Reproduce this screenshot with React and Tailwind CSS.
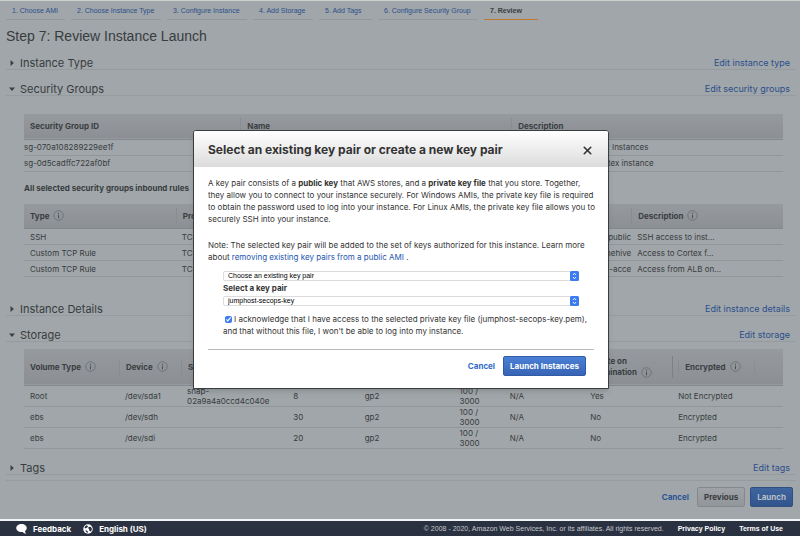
import { X } from "lucide-react";

const steps = [
  { label: "1. Choose AMI", cell: "w-[59px]" },
  { label: "2. Choose Instance Type", cell: "w-[90px]" },
  { label: "3. Configure Instance", cell: "w-[80px]" },
  { label: "4. Add Storage", cell: "w-[60px]" },
  { label: "5. Add Tags", cell: "w-[53px]" },
  { label: "6. Configure Security Group", cell: "w-[100px]" },
  { label: "7. Review", cell: "w-[54px]", active: true },
];

const groups = [
  { id: "sg-070a108289229ee1f", name: "", description: "Security group for EC2 Instances" },
  { id: "sg-0d5cadffc722af0bf", name: "", description: "Security group for Cortex instance" },
];

const rules = [
  { type: "SSH", protocol: "TCP", source: "-public", description: "SSH access to inst..." },
  { type: "Custom TCP Rule", protocol: "TCP", source: "hehive", description: "Access to Cortex f..." },
  { type: "Custom TCP Rule", protocol: "TCP", source: "b-acce", description: "Access from ALB on..." },
];

const volumes = [
  { type: "Root", device: "/dev/sda1", snapshot: "snap-02a9a4a0ccd4c040e", size: "8", remove: "Yes", encrypted: "Not Encrypted" },
  { type: "ebs", device: "/dev/sdh", snapshot: "", size: "30", remove: "No", encrypted: "Encrypted" },
  { type: "ebs", device: "/dev/sdi", snapshot: "", size: "20", remove: "No", encrypted: "Encrypted" },
];

const Info = () => (
  <svg viewBox="0 0 22 22" className="ml-1 inline-block size-[11px] shrink-0" fill="none" aria-hidden="true">
    <circle cx="11" cy="11" r="9.5" stroke="#686d71" strokeWidth="1.6" />
    <circle cx="11" cy="6.6" r="1.3" fill="#4b5054" />
    <path d="M11 9.5v7" stroke="#4b5054" strokeWidth="2" />
  </svg>
);

const Section = ({ title, edit, open }) => (
  <div className="mr-1 ml-[6px] flex h-5 items-end border-b border-[#959b9e] pr-[6px] pl-[3px]">
    <svg viewBox="0 0 8 8" className="mr-[5px] mb-[3px] size-[6px] fill-[#3b3f43]" aria-hidden="true">
      <path d={open ? "M0 2h8L4 6.500z" : "M2 0v8l4.500-4z"} />
    </svg>
    <h2 className="flex-1 text-[11px] leading-[12px]">{title}</h2>
    <a href="#" className="text-[9px] leading-[12px] text-[#2c4f8c]">{edit}</a>
  </div>
);

const Th = ({ children, info, line = true }) => (
  <th className="p-0 text-left font-bold">
    <div className={`flex h-4 items-center pl-[6px] whitespace-nowrap ${line ? "border-l border-[#888d91]" : ""}`}>
      {children}
      {info && <Info />}
    </div>
  </th>
);

const tableClass = "w-full table-fixed border-collapse text-[8px] leading-[10px]";
const headClass = "border-b border-[#85898d] bg-linear-to-b from-[#96999d] to-[#8c8f93] text-[#3a3e42]";
const rowClass = "border-b border-[#90969a]";

const GroupsTable = () => (
  <table className={tableClass}>
    <colgroup>
      <col className="w-[28.5%]" />
      <col className="w-[35.7%]" />
      <col />
    </colgroup>
    <thead className={headClass}>
      <tr className="h-[25px]">
        <Th line={false}>Security Group ID</Th>
        <Th>Name</Th>
        <Th>Description</Th>
      </tr>
    </thead>
    <tbody>
      {groups.map((g) => (
        <tr key={g.id} className={`h-4 ${rowClass}`}>
          <td className="p-0">{g.id}</td>
          <td className="p-0 pl-3">{g.name}</td>
          <td className="p-0 pl-3">{g.description}</td>
        </tr>
      ))}
    </tbody>
  </table>
);

const RulesTable = () => (
  <table className={tableClass}>
    <colgroup>
      <col className="w-[20%]" />
      <col className="w-[40%]" />
      <col className="w-[20%]" />
      <col />
    </colgroup>
    <thead className={headClass}>
      <tr className="h-[25px]">
        <Th info line={false}>Type</Th>
        <Th>Protocol</Th>
        <Th />
        <Th info>Description</Th>
      </tr>
    </thead>
    <tbody>
      {rules.map((r, i) => (
        <tr key={i} className={`h-4 ${rowClass}`}>
          <td className="p-0 pl-[6px]">{r.type}</td>
          <td className="p-0 pl-[6px]">{r.protocol}</td>
          <td className="p-0 text-right whitespace-nowrap">{r.source}</td>
          <td className="p-0 pl-[6px]">{r.description}</td>
        </tr>
      ))}
    </tbody>
  </table>
);

const StorageTable = () => (
  <table className={tableClass}>
    <colgroup>
      <col className="w-[12.500%]" />
      <col className="w-[8.200%]" />
      <col className="w-[14%]" />
      <col className="w-[9.400%]" />
      <col className="w-[12.500%]" />
      <col className="w-[6.600%]" />
      <col className="w-[10.600%]" />
      <col className="w-[11.600%]" />
      <col />
    </colgroup>
    <thead className={headClass}>
      <tr className="h-9">
        <Th info line={false}>Volume Type</Th>
        <Th info>Device</Th>
        <Th>Snapshot</Th>
        <Th />
        <Th />
        <Th />
        <Th />
        <th className="p-0 pl-[6px] text-left leading-[11px] font-bold">
          Delete on
          <br />
          <span className="inline-flex items-center">Termination<Info /></span>
        </th>
        <th className="p-0 text-left font-bold">
          <div className="flex h-[22px] items-center border-l border-[#7b8084] pl-[5px]">
            <div className="flex h-3 w-[77px] items-center border-x border-[#888d91] pl-[6px]">
              Encrypted
              <Info />
            </div>
          </div>
        </th>
      </tr>
    </thead>
    <tbody>
      {volumes.map((v) => (
        <tr key={v.device} className={`h-[21px] ${rowClass}`}>
          <td className="p-0 pl-[6px]">{v.type}</td>
          <td className="p-0 pl-[6px]">{v.device}</td>
          <td className="p-0 pr-5 pl-[6px]">{v.snapshot}</td>
          <td className="p-0 pl-[6px]">{v.size}</td>
          <td className="p-0 pl-[6px]">gp2</td>
          <td className="p-0 pl-[6px]">100 /<br />3000</td>
          <td className="p-0 pl-[6px]">N/A</td>
          <td className="p-0 pl-[6px]">{v.remove}</td>
          <td className="p-0 pl-[6px]">{v.encrypted}</td>
        </tr>
      ))}
    </tbody>
  </table>
);

const KeySelect = ({ id, label, options }) => (
  <div className="relative">
    <select
      id={id}
      aria-label={label}
      className="block h-[10px] w-full appearance-none rounded-[2px] border border-[#dcdcdc] bg-white pl-1 font-['Liberation_Sans',Arial,sans-serif] text-[7px] leading-[8px] text-black"
    >
      {options.map((o) => (
        <option key={o}>{o}</option>
      ))}
    </select>
    <svg viewBox="0 0 18 20" className="pointer-events-none absolute top-0 right-0 h-[10px] w-[9px]" aria-hidden="true">
      <rect width="18" height="20" rx="3" fill="#3d7bf2" />
      <path d="M6 8l3-3.500L12 8M6 12l3 3.500 3-3.500" fill="none" stroke="#fff" strokeWidth="1.800" />
    </svg>
  </div>
);

const KeyPairDialog = () => (
  <div
    role="dialog"
    aria-labelledby="dialog-title"
    className="w-[416px] overflow-hidden rounded-t-[3px] border border-[#3a3d40] bg-white text-[#333] shadow-md"
  >
    <div className="flex h-9 items-center justify-between bg-linear-to-b from-white to-[#dcdcdc] px-[14px]">
      <h2 id="dialog-title" className="pt-[2px] text-[12px] leading-4 font-bold">
        Select an existing key pair or create a new key pair
      </h2>
      <button type="button" aria-label="Close" className="pt-[2px]">
        <X size={13} strokeWidth={3} />
      </button>
    </div>
    <div className="px-[14px] pt-[10px] pb-3 text-[8px] leading-[12px] whitespace-nowrap">
      <p>
        A key pair consists of a <b>public key</b> that AWS stores, and a <b>private key file</b> that you store. Together,
        <br />
        they allow you to connect to your instance securely. For Windows AMIs, the private key file is required
        <br />
        to obtain the password used to log into your instance. For Linux AMIs, the private key file allows you to
        <br />
        securely SSH into your instance.
      </p>
      <p className="mt-[14px]">
        Note: The selected key pair will be added to the set of keys authorized for this instance. Learn more
        <br />
        about <a href="#" className="text-[#2456b0]">removing existing key pairs from a public AMI</a> .
      </p>
      <div className="mx-[15px] mt-2">
        <KeySelect
          id="key-mode"
          label="Key pair option"
          options={["Choose an existing key pair", "Create a new key pair", "Proceed without a key pair"]}
        />
        <label htmlFor="key-name" className="my-[2px] block leading-[11px] font-bold">Select a key pair</label>
        <KeySelect id="key-name" options={["jumphost-secops-key"]} />
        <label className="mt-[7px] block">
          <input type="checkbox" defaultChecked className="mr-[2px] ml-[2px] size-[7px] align-[-1px] accent-[#3d7bf2]" />
          I acknowledge that I have access to the selected private key file (jumphost-secops-key.pem),
          <br />
          and that without this file, I won't be able to log into my instance.
        </label>
      </div>
      <div className="mt-3 flex items-center justify-end gap-2 border-t border-[#bbb] pt-[6px] pr-2 font-bold">
        <button type="button" className="text-[#2f6bc8]">Cancel</button>
        <button
          type="button"
          className="h-5 rounded-[2px] border border-[#2f5ba8] bg-linear-to-b from-[#4a80d6] to-[#3864b4] px-[6px] text-white"
        >
          Launch Instances
        </button>
      </div>
    </div>
  </div>
);

const Footer = () => (
  <footer className="flex h-[17px] items-center border-t-2 border-[#f2f5f5] bg-[#2a3140] pr-[17px] pl-4 text-[8px] leading-[10px] font-bold text-white">
    <button type="button" className="flex items-center gap-[6px]">
      <svg viewBox="0 0 22 20" className="h-[10px] w-[11px] fill-white" aria-hidden="true">
        <path d="M11 0c6 0 10.500 3.500 10.500 8 0 2.800-1.500 5-3.500 6.300.2 2 1 3.500 2.500 4.900-3 0-5.500-1.200-7-3.200-7 .8-13-2.700-13-8C.5 3.500 5 0 11 0z" />
      </svg>
      Feedback
    </button>
    <button type="button" className="ml-3 flex items-center gap-[6px]">
      <svg viewBox="0 0 20 20" className="size-[10px]" aria-hidden="true">
        <circle cx="10" cy="10" r="9.500" fill="#fff" />
        <path d="M3 7c1-2.500 3-4 5-4.500L10 5 8 7.500 5 9zM12 5.500l4 .5 2 4-2 5-3-1-1-4-2-2zM5 12l4 2 1 4-4-2z" fill="#2a3140" />
      </svg>
      English (US)
    </button>
    <div className="ml-auto flex gap-[14px] font-['Liberation_Sans',Arial,sans-serif] text-[7px] whitespace-nowrap">
      <span className="font-normal text-[#c4c8cd]">
        © 2008 - 2020, Amazon Web Services, Inc. or its affiliates. All rights reserved.
      </span>
      <a href="#">Privacy Policy</a>
      <a href="#">Terms of Use</a>
    </div>
  </footer>
);

export default function App() {
  return (
    <div className="relative flex min-h-screen flex-col bg-[#a0a6a9] font-[Inter,Arial,sans-serif] text-[#383c40]">
      <main className="flex-1 border-t border-[#cdd1cd]">
        <nav className="flex gap-[6px] px-[6px] font-['Liberation_Sans',Arial,sans-serif] text-[7px] leading-[16px] whitespace-nowrap">
          {steps.map((s) => (
            <a
              key={s.label}
              href="#"
              className={`${s.cell} border-b pt-[2px] pl-[6px] ${
                s.active ? "border-b-[#c07a2c] font-bold" : "border-b-[#92989b] text-[#2c4f8c]"
              }`}
            >
              {s.label}
            </a>
          ))}
        </nav>
        <h1 className="mt-[7px] ml-[6px] font-['Liberation_Sans',Arial,sans-serif] text-[14px] leading-[18px]">
          Step 7: Review Instance Launch
        </h1>
        <div className="mt-[5px]">
          <Section title="Instance Type" edit="Edit instance type" />
        </div>
        <div className="mt-[6px]">
          <Section title="Security Groups" edit="Edit security groups" open />
        </div>
        <div className="mt-[18px] mr-[17px] ml-6">
          <GroupsTable />
          <h3 className="mt-[11px] mb-[11px] text-[8px] leading-[10px] font-bold">All selected security groups inbound rules</h3>
          <RulesTable />
        </div>
        <div className="mt-[19px]">
          <Section title="Instance Details" edit="Edit instance details" />
        </div>
        <div className="mt-[6px]">
          <Section title="Storage" edit="Edit storage" open />
        </div>
        <div className="mt-[7px] mr-[17px] ml-6">
          <StorageTable />
        </div>
        <div className="mt-[6px]">
          <Section title="Tags" edit="Edit tags" />
        </div>
        <div className="mt-[5px] mr-1 ml-[6px] flex items-center justify-end border-t border-[#959b9e] pt-[6px] pr-[3px] text-[8px] leading-[10px] font-bold">
          <button type="button" className="mr-2 text-[#2c5596]">Cancel</button>
          <button
            type="button"
            className="mr-[5px] h-5 rounded-[2px] border border-[#85898d] bg-linear-to-b from-[#9fa2a6] to-[#929599] px-[6px]"
          >
            Previous
          </button>
          <button
            type="button"
            className="h-5 rounded-[2px] border border-[#30507f] bg-linear-to-b from-[#3f659f] to-[#32548c] px-[6px] text-[#b8bec6]"
          >
            Launch
          </button>
        </div>
      </main>
      <Footer />
      <div className="absolute inset-x-0 top-[130px] flex justify-center pl-[2px]">
        <KeyPairDialog />
      </div>
    </div>
  );
}
